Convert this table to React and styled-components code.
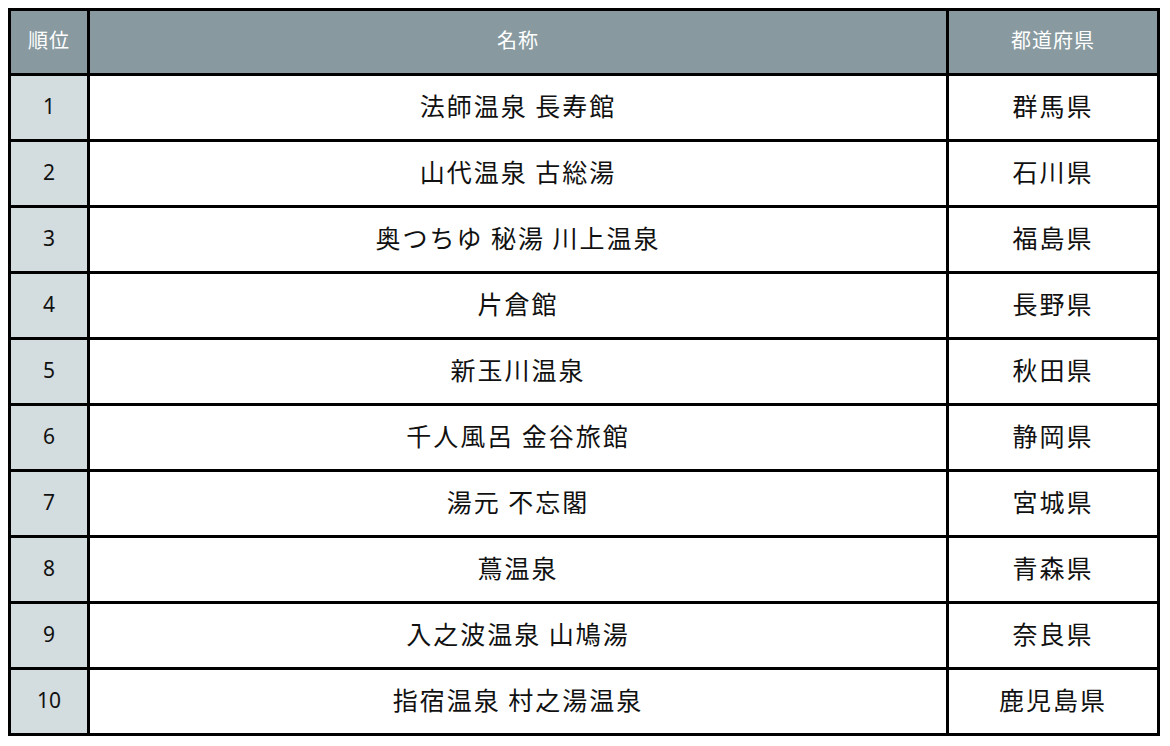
import React from 'react';
import styled, { createGlobalStyle } from 'styled-components';

const GlobalStyle = createGlobalStyle`
  html, body {
    margin: 0;
    padding: 0;
    background: #ffffff;
  }
  body {
    font-family: "Noto Sans CJK JP", "Noto Sans", sans-serif;
  }
`;

const Page = styled.div`
  padding: 8px 10px 0 8px;
`;

const Table = styled.table`
  width: 1149px;
  border-collapse: collapse;
  table-layout: fixed;
  border: 3px solid #000;
`;

const HeadCell = styled.th`
  height: 57px;
  background: #889aa0;
  color: #ffffff;
  font-weight: 400;
  font-size: 20px;
  letter-spacing: 1px;
  border: 3px solid #000;
  text-align: center;
  padding: 0 0 5px;
`;

const RankCell = styled.td`
  height: 60px;
  background: #d3dcdf;
  color: #111;
  font-family: "Noto Sans", "Noto Sans CJK JP", sans-serif;
  font-size: 21px;
  border: 3px solid #000;
  text-align: center;
  padding: 0 0 3px;
`;

const Cell = styled.td`
  background: #ffffff;
  color: #111;
  font-size: 25px;
  letter-spacing: 2px;
  border: 3px solid #000;
  text-align: center;
  padding: 0 0 5px;
`;

const rows = [
  ['法師温泉 長寿館', '群馬県'],
  ['山代温泉 古総湯', '石川県'],
  ['奥つちゆ 秘湯 川上温泉', '福島県'],
  ['片倉館', '長野県'],
  ['新玉川温泉', '秋田県'],
  ['千人風呂 金谷旅館', '静岡県'],
  ['湯元 不忘閣', '宮城県'],
  ['蔦温泉', '青森県'],
  ['入之波温泉 山鳩湯', '奈良県'],
  ['指宿温泉 村之湯温泉', '鹿児島県'],
];

export default function App() {
  return (
    <Page>
      <GlobalStyle />
      <Table>
        <colgroup>
          <col style={{ width: 79 }} />
          <col style={{ width: 859 }} />
          <col style={{ width: 211 }} />
        </colgroup>
        <thead>
          <tr>
            <HeadCell>順位</HeadCell>
            <HeadCell>名称</HeadCell>
            <HeadCell>都道府県</HeadCell>
          </tr>
        </thead>
        <tbody>
          {rows.map(([name, pref], i) => (
            <tr key={i}>
              <RankCell>{i + 1}</RankCell>
              <Cell>{name}</Cell>
              <Cell>{pref}</Cell>
            </tr>
          ))}
        </tbody>
      </Table>
    </Page>
  );
}
